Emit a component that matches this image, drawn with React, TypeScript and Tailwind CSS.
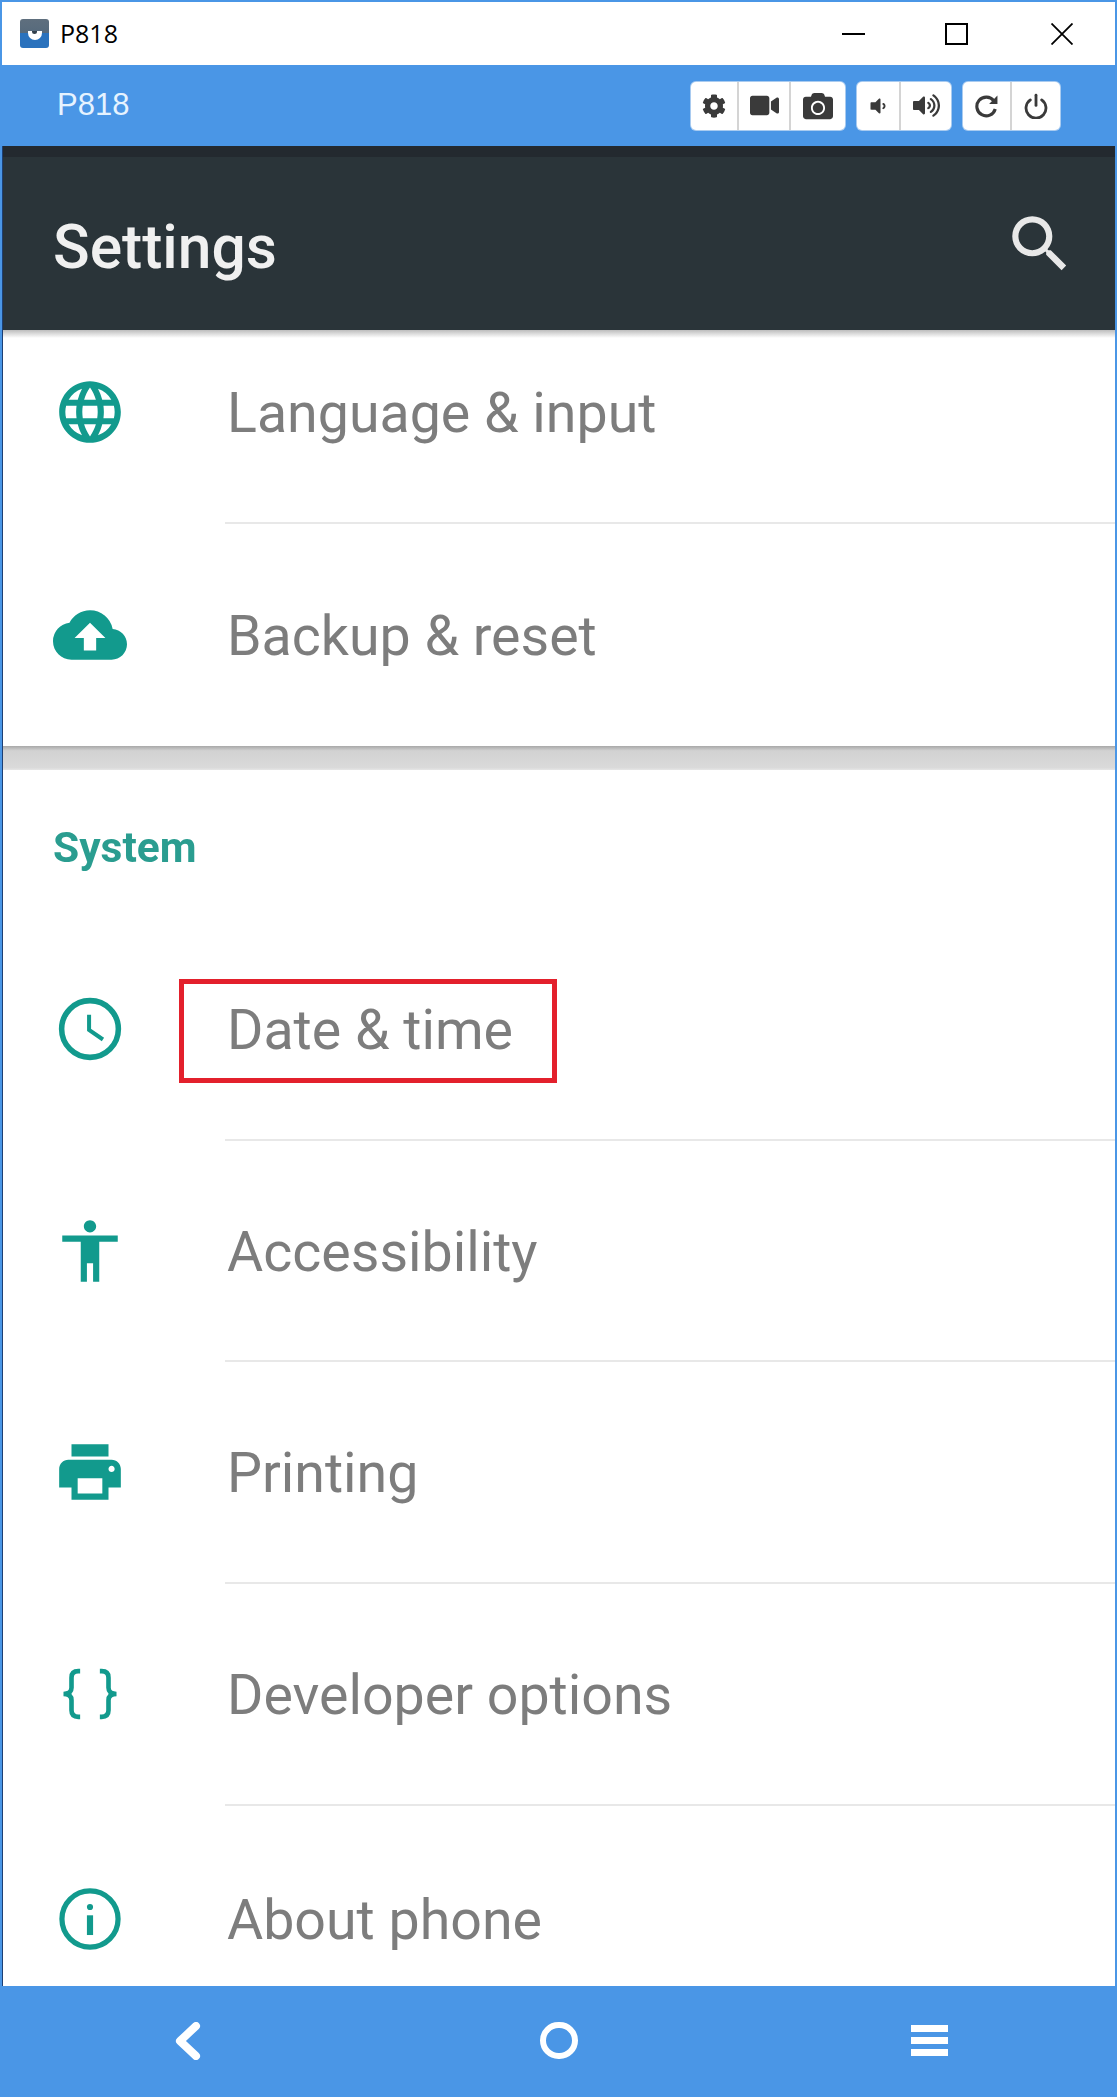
import React from "react";
import {FaCamera, FaCog, FaVideo, FaVolumeDown, FaVolumeUp} from "react-icons/fa";
import {MdAccessibility, MdCloudUpload, MdLanguage, MdPrint, MdSearch} from "react-icons/md";

const BracesIcon: React.FC = () => (
    <svg viewBox="0 0 24 24" fill="none" stroke="currentColor" strokeWidth="1.5" className="h-[74px] w-[74px]">
        <path d="M8.8 4.6H8.2C6.7 4.6 6 5.3 6 6.7V10C6 11.2 5.2 12 3.4 12C5.2 12 6 12.8 6 14V17.3C6 18.7 6.7 19.4 8.2 19.4H8.8"/>
        <path d="M15.2 4.6H15.8C17.3 4.6 18 5.3 18 6.7V10C18 11.2 18.8 12 20.6 12C18.8 12 18 12.8 18 14V17.3C18 18.7 17.3 19.4 15.8 19.4H15.2"/>
    </svg>
);

const ClockIcon: React.FC = () => (
    <svg viewBox="0 0 24 24" fill="none" stroke="currentColor" className="h-[74px] w-[74px]">
        <circle cx="12" cy="12" r="9.2" strokeWidth="1.8"/>
        <path d="M11.7 7.4V12.3L16.2 15.4" strokeWidth="1.3"/>
    </svg>
);

const InfoIcon: React.FC = () => (
    <svg viewBox="0 0 24 24" fill="none" stroke="currentColor" className="h-[74px] w-[74px]">
        <circle cx="12" cy="12" r="9.1" strokeWidth="1.7"/>
        <path d="M12 10.8V17.2" strokeWidth="2"/>
        <circle cx="12" cy="8.1" r="1" fill="currentColor" stroke="none"/>
    </svg>
);

const RedoIcon: React.FC = () => (
    <svg viewBox="0 0 24 24" fill="none" stroke="currentColor" className="h-[25px] w-[25px]">
        <path d="M19 7.6A9 9 0 1 0 20.4 15.4" strokeWidth="3"/>
        <path d="M22.5 2.5V10.5H14.5Z" fill="currentColor" stroke="none"/>
    </svg>
);

const PowerIcon: React.FC = () => (
    <svg viewBox="0 0 24 24" fill="none" stroke="currentColor" strokeWidth="2.6" strokeLinecap="round" className="h-[26px] w-[26px]">
        <path d="M12 2V11.5"/>
        <path d="M6.8 6.4A9.2 9.2 0 1 0 17.2 6.4"/>
    </svg>
);

const ToolButton: React.FC<{ width: string; last?: boolean; children: React.ReactNode }> = ({width, last, children}) => (
    <div className={`flex items-center justify-center text-[#3a3a3a] ${width} ${last ? "" : "border-r-2 border-[#d4d4d4]"}`}>
        {children}
    </div>
);

const ToolGroup: React.FC<{ children: React.ReactNode }> = ({children}) => (
    <div className="flex h-12 rounded-[5px] bg-white shadow-[0_0_0_1px_#a9cbf0]">{children}</div>
);

interface RowProps {
    icon: React.ReactNode;
    label: string;
    className?: string;
}

const Row: React.FC<RowProps> = ({icon, label, className = "h-[219px]"}) => (
    <div className={`flex shrink-0 pl-[50px] ${className}`}>
        <div className="flex w-[74px] items-center justify-center text-[#129a8d] blur-[0.5px]">{icon}</div>
        <div className="ml-[98px] flex flex-1 items-center pt-[4px]">
            <span className="pl-[2px] font-['Roboto',sans-serif] text-[55.5px] leading-none text-[#7d7d7d] blur-[0.7px]">
                {label}
            </span>
        </div>
    </div>
);

const Divider: React.FC = () => <div className="ml-[222px] h-[2px] shrink-0 bg-[#e8e8e8]"/>;

export default function App() {
    return (
        <div className="flex h-[2097px] w-[1117px] flex-col bg-[#4a96e6] p-[2px]">
            {/* window title bar */}
            <div className="flex h-[63px] shrink-0 items-center bg-white pl-[18px] pr-[42px]">
                <div className="relative h-[29px] w-[29px] overflow-hidden rounded-[3px] bg-[linear-gradient(#5f6f7e_0%,#566a7c_48%,#2a72bd_48%,#2a72bd_100%)]">
                    <div className="absolute left-[8px] top-[12px] h-[9px] w-[14px] rounded-b-full bg-white"/>
                    <div className="absolute left-[12px] top-[12px] h-[3px] w-[5px] rounded-b-full bg-[#33404c]"/>
                </div>
                <span className="ml-[11px] font-['Open_Sans',sans-serif] text-[25px] text-black">P818</span>
                <div className="ml-auto flex items-center">
                    <div className="h-[2px] w-[23px] bg-black"/>
                    <div className="ml-[80px] h-[22px] w-[23px] border-2 border-black"/>
                    <svg viewBox="0 0 22 22" className="ml-[83px] h-[22px] w-[22px]" stroke="black" strokeWidth="1.8">
                        <path d="M0.5 0.5L21.5 21.5M21.5 0.5L0.5 21.5"/>
                    </svg>
                </div>
            </div>

            {/* emulator toolbar */}
            <div className="flex h-[81px] shrink-0 items-center pl-[55px] pr-[55px]">
                <span className="font-['Liberation_Sans',sans-serif] text-[31px] text-[#e6f3ff]">P818</span>
                <div className="ml-auto flex gap-3">
                    <ToolGroup>
                        <ToolButton width="w-[48px]"><FaCog size={24}/></ToolButton>
                        <ToolButton width="w-[52px]"><FaVideo size={29}/></ToolButton>
                        <ToolButton width="w-[54px]" last><FaCamera size={30}/></ToolButton>
                    </ToolGroup>
                    <ToolGroup>
                        <ToolButton width="w-[44px]"><FaVolumeDown size={20}/></ToolButton>
                        <ToolButton width="w-[50px]" last><FaVolumeUp size={27}/></ToolButton>
                    </ToolGroup>
                    <ToolGroup>
                        <ToolButton width="w-[49px]"><RedoIcon/></ToolButton>
                        <ToolButton width="w-[48px]" last><PowerIcon/></ToolButton>
                    </ToolGroup>
                </div>
            </div>

            {/* phone screen */}
            <div className="flex min-h-0 flex-1 flex-col overflow-hidden border-l border-[#1d3f73] bg-white">
                <div className="flex h-[184px] shrink-0 items-center justify-between border-t-[11px] border-[#23292f] bg-[#2a3439] pl-[50px] pr-[38px]">
                    <span className="pt-[9px] font-['Roboto',sans-serif] text-[60.5px] font-medium leading-none text-[#f0f0f0] blur-[0.7px]">
                        Settings
                    </span>
                    <MdSearch size={74} className="text-[#e8e8e8] blur-[0.4px]"/>
                </div>
                <div className="h-[8px] shrink-0 bg-[linear-gradient(#bdbdbd,#ffffff)]"/>

                <Row icon={<MdLanguage size={74}/>} label="Language & input" className="h-[184px] pb-[36px]"/>
                <Divider/>
                <Row icon={<MdCloudUpload size={74}/>} label="Backup & reset" className="h-[222px]"/>
                <div className="h-[24px] shrink-0 bg-[linear-gradient(#a8a8a8,#d2d2d2_20%,#dadada_90%,#e6e6e6)]"/>

                <div className="flex h-[149px] shrink-0 pl-[50px] pt-[52px]">
                    <span className="font-['Roboto',sans-serif] text-[42.5px] font-bold leading-[52px] text-[#2a9d90] blur-[0.7px]">
                        System
                    </span>
                </div>

                <Row icon={<ClockIcon/>} label="Date & time" className="h-[220px]"/>
                <Divider/>
                <Row icon={<MdAccessibility size={74}/>} label="Accessibility"/>
                <Divider/>
                <Row icon={<MdPrint size={74}/>} label="Printing" className="h-[220px]"/>
                <Divider/>
                <Row icon={<BracesIcon/>} label="Developer options" className="h-[220px]"/>
                <Divider/>
                <Row icon={<InfoIcon/>} label="About phone" className="h-[181px] pt-[45px]"/>
            </div>

            {/* navigation bar */}
            <div className="grid h-[109px] shrink-0 grid-cols-3 place-items-center">
                <svg viewBox="0 0 27 38" className="h-[38px] w-[27px]" fill="none" stroke="white" strokeWidth="8" strokeLinejoin="round" strokeLinecap="round">
                    <path d="M22 4L6 19L22 34"/>
                </svg>
                <div className="h-[37px] w-[38px] rounded-full border-[6px] border-white"/>
                <div className="flex w-[37px] flex-col gap-[5px]">
                    <div className="h-[7px] bg-white"/>
                    <div className="h-[7px] bg-white"/>
                    <div className="h-[7px] bg-white"/>
                </div>
            </div>

            {/* callout over the Date & time row */}
            <div className="absolute left-[179px] top-[979px] h-[104px] w-[378px] border-[5px] border-[#e3202c]"/>
        </div>
    );
}
